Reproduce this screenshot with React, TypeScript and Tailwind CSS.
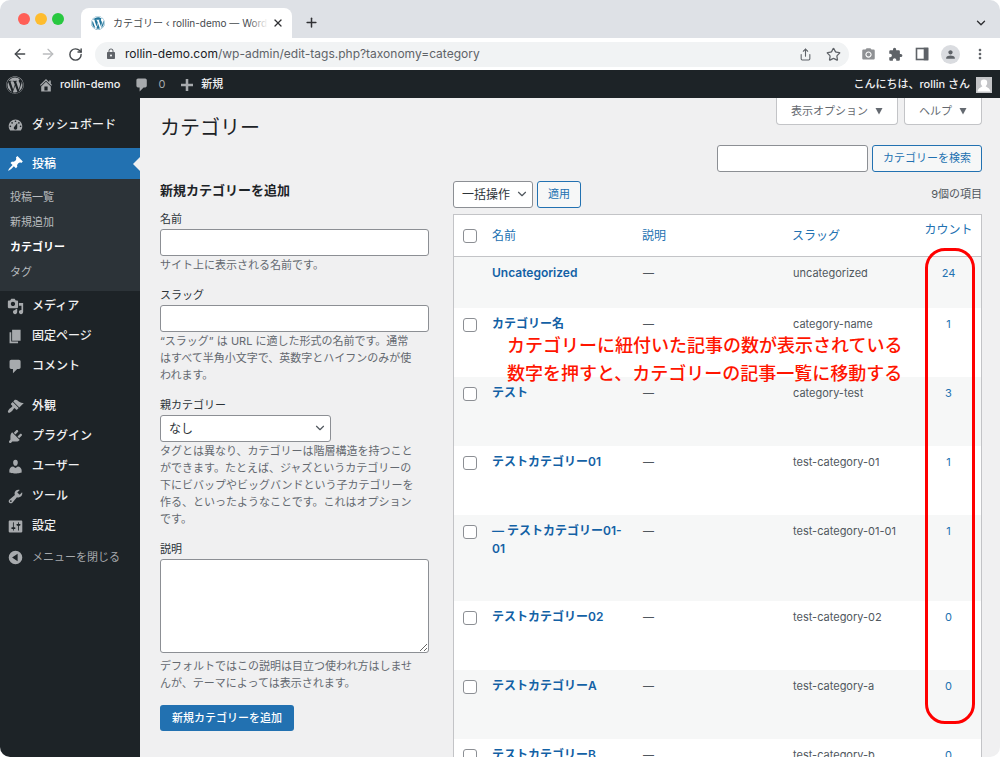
import type { ReactNode } from "react"
import { ArrowLeft, ArrowRight, ChevronDown, Plus, RotateCw, Share, Star, X } from "lucide-react"
import { FaWordpress } from "react-icons/fa"
import { MdExtension, MdLock, MdMoreVert, MdPerson, MdPhotoCamera } from "react-icons/md"

const ICONS = {
    dashboard:
        "M3.76 16h12.48c1.1-1.37 1.76-3.11 1.76-5 0-4.42-3.58-8-8-8s-8 3.58-8 8c0 1.89.66 3.63 1.76 5zM10 4c.55 0 1 .45 1 1s-.45 1-1 1-1-.45-1-1 .45-1 1-1zM6 6c.55 0 1 .45 1 1s-.45 1-1 1-1-.45-1-1 .45-1 1-1zm8 0c.55 0 1 .45 1 1s-.45 1-1 1-1-.45-1-1 .45-1 1-1zm-5.37 5.55L12 7v6c0 1.1-.9 2-2 2s-2-.9-2-2c0-.57.24-1.08.63-1.45zM4 10c.55 0 1 .45 1 1s-.45 1-1 1-1-.45-1-1 .45-1 1-1zm12 0c.55 0 1 .45 1 1s-.45 1-1 1-1-.45-1-1 .45-1 1-1z",
    post: "M10.44 3.02l1.82-1.82 6.36 6.35-1.83 1.82c-1.05-.68-2.48-.57-3.41.36l-.75.75c-.92.93-1.04 2.35-.35 3.41l-1.83 1.82-2.41-2.41-2.8 2.79c-.42.42-3.38 2.71-3.8 2.29s1.86-3.39 2.28-3.81l2.79-2.79L4.1 9.36l1.83-1.82c1.05.69 2.48.57 3.4-.36l.75-.75c.93-.92 1.05-2.35.36-3.41z",
    media: "M13 11V4c0-.55-.45-1-1-1h-1.67L9 1H5L3.67 3H2c-.55 0-1 .45-1 1v7c0 .55.45 1 1 1h10c.55 0 1-.45 1-1zM7 4.5c1.38 0 2.5 1.12 2.5 2.5S8.38 9.5 7 9.5 4.5 8.38 4.5 7 5.62 4.5 7 4.5zM14 6h5v10.5c0 1.38-1.12 2.5-2.5 2.5S14 17.88 14 16.5s1.12-2.5 2.5-2.5c.17 0 .34.02.5.05V9h-3V6zm-4 8.05V13h2v3.5c0 1.38-1.12 2.5-2.5 2.5S7 17.88 7 16.5 8.12 14 9.5 14c.17 0 .34.02.5.05z",
    page: "M6 15V2h10v13H6zm-1 1h8v2H3V5h2v11z",
    comments: "M5 2h9c1.1 0 2 .9 2 2v7c0 1.1-.9 2-2 2h-2l-5 5v-5H5c-1.1 0-2-.9-2-2V4c0-1.1.9-2 2-2z",
    appearance:
        "M14.48 11.06L7.41 3.99l1.5-1.5c.5-.56 2.3-.47 3.51.32 1.21.8 1.43 1.28 2.91 2.1 1.18.64 2.45 1.26 4.45.85zm-.71.71L6.7 4.7 4.93 6.47c-.39.39-.39 1.02 0 1.41l1.06 1.06c.39.39.39 1.03 0 1.42-.6.6-1.43 1.11-2.21 1.69-.35.26-.7.53-1.01.84C1.43 14.23.4 16.08 1.4 17.07c.99 1 2.84-.03 4.18-1.36.31-.31.58-.66.85-1.02.57-.78 1.08-1.61 1.69-2.21.39-.39 1.02-.39 1.41 0l1.06 1.06c.39.39 1.02.39 1.41 0z",
    plugins:
        "M13.11 4.36L9.87 7.6 8 5.73l3.24-3.24c.35-.34 1.05-.2 1.56.32.52.51.66 1.21.31 1.55zm-8 1.77l.91-1.12 9.01 9.01-1.19.84c-.71.71-2.63 1.16-3.82 1.16H6.14L4.9 17.26c-.59.59-1.54.59-2.12 0-.59-.58-.59-1.53 0-2.12l1.24-1.24v-3.88c0-1.13.4-3.19 1.09-3.89zm7.26 3.97l3.24-3.24c.34-.35 1.04-.21 1.55.31.52.51.66 1.21.31 1.55l-3.24 3.25z",
    users: "M10 9.25c-2.27 0-2.73-3.44-2.73-3.44C7 4.02 7.82 2 9.97 2c2.16 0 2.98 2.02 2.71 3.81 0 0-.41 3.44-2.68 3.44zm0 2.57L12.72 10c2.39 0 4.52 2.33 4.52 4.53v2.49s-3.65 1.13-7.24 1.13c-3.65 0-7.24-1.13-7.24-1.13v-2.49c0-2.25 1.94-4.48 4.47-4.48z",
    tools: "M16.68 9.77c-1.34 1.34-3.3 1.67-4.95.99l-5.41 6.52c-.99.99-2.59.99-3.58 0s-.99-2.59 0-3.57l6.52-5.42c-.68-1.65-.35-3.61.99-4.95 1.28-1.28 3.12-1.62 4.72-1.06l-2.89 2.89 2.82 2.82 2.86-2.87c.53 1.58.18 3.39-1.08 4.65zM3.81 16.21c.4.39 1.04.39 1.43 0 .4-.4.4-1.04 0-1.43-.39-.4-1.03-.4-1.43 0-.39.39-.39 1.03 0 1.43z",
    settings:
        "M18 16V4c0-.55-.45-1-1-1H3c-.55 0-1 .45-1 1v12c0 .55.45 1 1 1h14c.55 0 1-.45 1-1zM8 11h1c.55 0 1 .45 1 1s-.45 1-1 1H8v1.5c0 .28-.22.5-.5.5s-.5-.22-.5-.5V13H6c-.55 0-1-.45-1-1s.45-1 1-1h1V5.5c0-.28.22-.5.5-.5s.5.22.5.5V11zm5-2h-1c-.55 0-1-.45-1-1s.45-1 1-1h1V5.5c0-.28.22-.5.5-.5s.5.22.5.5V7h1c.55 0 1 .45 1 1s-.45 1-1 1h-1v5.5c0 .28-.22.5-.5.5s-.5-.22-.5-.5V9z",
    collapse: "M10 2a8 8 0 1 0 0 16a8 8 0 1 0 0-16zM12.5 5.5v9L6 10z",
    home: "M16 8.5l1.53 1.53-1.06 1.06L10 4.6l-6.47 6.49-1.06-1.06L10 2.5l4 4v-2h2v4zm-6-2.46l6 5.99V18H4v-5.97zM12 17v-5H8v5h4z",
    plus: "M17.5 8.4v3.2h-5.9v5.9h-3.2v-5.9H2.500v-3.2h5.9V2.500h3.2v5.9z",
}

type IconName = keyof typeof ICONS

function Dashicon({ name, className = "size-[18px]" }: { name: IconName; className?: string }) {
    return (
        <svg viewBox="0 0 20 20" fill="currentColor" fillRule="evenodd" className={className} aria-hidden="true">
            <path d={ICONS[name]} />
        </svg>
    )
}

const posts = ["投稿一覧", "新規追加", "カテゴリー", "タグ"]

const contentMenu: { icon: IconName; label: string }[] = [
    { icon: "media", label: "メディア" },
    { icon: "page", label: "固定ページ" },
    { icon: "comments", label: "コメント" },
]

const siteMenu: { icon: IconName; label: string }[] = [
    { icon: "appearance", label: "外観" },
    { icon: "plugins", label: "プラグイン" },
    { icon: "users", label: "ユーザー" },
    { icon: "tools", label: "ツール" },
    { icon: "settings", label: "設定" },
]

const categories = [
    { name: "Uncategorized", slug: "uncategorized", count: 24, height: "h-[51px]", locked: true },
    { name: "カテゴリー名", slug: "category-name", count: 1, height: "h-[69px]" },
    { name: "テスト", slug: "category-test", count: 3, height: "h-[69px]" },
    { name: "テストカテゴリー01", slug: "test-category-01", count: 1, height: "h-[69px]" },
    { name: "— テストカテゴリー01-01", slug: "test-category-01-01", count: 1, height: "h-[86px]" },
    { name: "テストカテゴリー02", slug: "test-category-02", count: 0, height: "h-[69px]" },
    { name: "テストカテゴリーA", slug: "test-category-a", count: 0, height: "h-[69px]" },
    { name: "テストカテゴリーB", slug: "test-category-b", count: 0, height: "h-[69px]" },
]

const fieldClass = "block w-full rounded-[3px] border border-[#8c8f94] bg-white"
const outlineButton =
    "h-[27px] shrink-0 rounded-[3px] border border-[#2271b1] bg-[#f6f7f7] px-2.5 text-[11px] text-[#2271b1]"
const screenTab =
    "flex h-[27px] items-center gap-[7px] rounded-b border border-t-0 border-[#c3c4c7] bg-white px-3.5"

function Browser() {
    return (
        <header className="shrink-0 bg-[#dee1e6]">
            <div className="flex h-[38px] items-end">
                <div className="flex gap-[5px] self-center pl-[18px] pr-[17px]">
                    <span className="size-3 rounded-full bg-[#ff5f57]" />
                    <span className="size-3 rounded-full bg-[#febc2e]" />
                    <span className="size-3 rounded-full bg-[#28c840]" />
                </div>
                <div className="flex h-[30px] w-[211px] items-center rounded-t-lg bg-white pl-2.5 pr-2">
                    <FaWordpress className="size-[14px] shrink-0 text-[#21759b]" />
                    <span className="relative ml-2 min-w-0 flex-1 overflow-hidden whitespace-nowrap text-[10px] text-[#45494d]">
                        カテゴリー ‹ rollin-demo — WordPress
                        <span className="absolute inset-y-0 right-0 w-5 bg-linear-to-r from-transparent to-white" />
                    </span>
                    <button aria-label="Close tab" className="ml-1 text-[#303134]">
                        <X className="size-3" strokeWidth={2.5} />
                    </button>
                </div>
                <button aria-label="New tab" className="mb-2 ml-3 text-[#303134]">
                    <Plus className="size-[15px]" strokeWidth={2.4} />
                </button>
                <button aria-label="Search tabs" className="mb-2 ml-auto mr-3 text-[#303134]">
                    <ChevronDown className="size-3.5" strokeWidth={2.4} />
                </button>
            </div>
            <div className="flex h-8 items-center bg-white pl-3 pr-3">
                <div className="flex gap-3 text-[#45494d]">
                    <button aria-label="Back">
                        <ArrowLeft className="size-4" />
                    </button>
                    <button aria-label="Forward" className="text-[#babcbe]">
                        <ArrowRight className="size-4" />
                    </button>
                    <button aria-label="Reload">
                        <RotateCw className="size-[15px]" strokeWidth={2.3} />
                    </button>
                </div>
                <div className="ml-3 flex h-[25px] flex-1 items-center rounded-full bg-[#f1f3f4] pl-2.5 pr-2 text-[#5f6368]">
                    <MdLock className="size-3" />
                    <span className="ml-2 flex-1 text-xs">
                        <span className="text-[#202124]">rollin-demo.com</span>
                        /wp-admin/edit-tags.php?taxonomy=category
                    </span>
                    <button aria-label="Share">
                        <Share className="size-[13px]" />
                    </button>
                    <button aria-label="Bookmark" className="ml-3.5">
                        <Star className="size-[15px]" />
                    </button>
                </div>
                <div className="ml-3 flex items-center gap-3 text-[#5f6368]">
                    <button aria-label="Screenshot" className="text-[#8f9194]">
                        <MdPhotoCamera className="size-[15px]" />
                    </button>
                    <button aria-label="Extensions">
                        <MdExtension className="size-[15px]" />
                    </button>
                    <button aria-label="Side panel">
                        <svg viewBox="0 0 14 14" className="size-3.5" fill="none" stroke="currentColor" strokeWidth="1.6">
                            <rect x="1.5" y="1.5" width="11" height="11" />
                            <rect x="9.5" y="1.5" width="3" height="11" fill="currentColor" />
                        </svg>
                    </button>
                    <button aria-label="Profile" className="rounded-full bg-[#dadce0] p-[3px]">
                        <MdPerson className="size-[13px]" />
                    </button>
                    <button aria-label="Menu">
                        <MdMoreVert className="size-4" />
                    </button>
                </div>
            </div>
        </header>
    )
}

function AdminBar() {
    return (
        <div className="flex h-7 shrink-0 items-center bg-[#1d2327] pl-[6px] pr-2 pt-px text-[11px] font-medium text-[#f0f0f1]">
            <a href="#" aria-label="WordPress">
                <FaWordpress className="size-[18px] text-[#a7aaad]" />
            </a>
            <a href="#" className="ml-3.5 flex items-center gap-1.5">
                <Dashicon name="home" className="size-4 text-[#a7aaad]" />
                rollin-demo
            </a>
            <a href="#" className="ml-3.5 flex items-center gap-2 font-normal text-[#a7aaad]">
                <Dashicon name="comments" className="size-4" />0
            </a>
            <a href="#" className="ml-3.5 flex items-center gap-1.5">
                <Dashicon name="plus" className="size-4 text-[#a7aaad]" />
                新規
            </a>
            <a href="#" className="ml-auto flex items-center gap-1.5">
                こんにちは、rollin さん
                <svg viewBox="0 0 16 16" className="size-4" aria-hidden="true">
                    <rect width="16" height="16" fill="#c3c4c7" />
                    <path
                        d="M8 2.5a3.2 3.2 0 0 1 3.2 3.4c0 1.4-.7 2.5-1.5 3 0 1.2 4.3 1.5 4.8 5.6h-13c.5-4.1 4.8-4.4 4.8-5.6-.8-.5-1.5-1.6-1.5-3A3.2 3.2 0 0 1 8 2.5z"
                        fill="#fff"
                    />
                </svg>
            </a>
        </div>
    )
}

function MenuItem({ icon, label }: { icon: IconName; label: string }) {
    return (
        <a href="#" className="flex h-[30px] items-center gap-2 pl-[7px] font-medium text-[#f0f0f1]">
            <Dashicon name={icon} className="size-[17px] text-[#a7aaad]" />
            {label}
        </a>
    )
}

function Sidebar() {
    return (
        <nav className="w-[140px] shrink-0 bg-[#1d2327] pt-3 text-xs">
            <MenuItem icon="dashboard" label="ダッシュボード" />
            <a
                href="#"
                className="relative mt-2 flex h-[31px] items-center gap-2 bg-[#2271b1] pl-[7px] font-medium text-white"
            >
                <Dashicon name="post" className="size-[17px]" />
                投稿
                <span className="absolute right-0 top-1/2 -translate-y-1/2 border-y-[7px] border-r-[7px] border-y-transparent border-r-[#f0f0f1]" />
            </a>
            <div className="bg-[#2c3338] py-1.5 text-[11px]">
                {posts.map((label) => (
                    <a
                        key={label}
                        href="#"
                        className={
                            label === "カテゴリー"
                                ? "flex h-[25px] items-center pl-2.5 font-bold text-white"
                                : "flex h-[25px] items-center pl-2.5 text-[#b9bcbf]"
                        }
                    >
                        {label}
                    </a>
                ))}
            </div>
            {contentMenu.map((item) => (
                <MenuItem key={item.label} {...item} />
            ))}
            <div className="h-2.5" />
            {siteMenu.map((item) => (
                <MenuItem key={item.label} {...item} />
            ))}
            <button className="flex h-8 items-center gap-2 pl-[7px] text-[11px] text-[#a7aaad]">
                <Dashicon name="collapse" className="size-[17px]" />
                メニューを閉じる
            </button>
        </nav>
    )
}

function Field({ id, label, help, children }: { id: string; label: string; help: string; children: ReactNode }) {
    return (
        <div className="mb-[13px]">
            <label htmlFor={id} className="block pb-px leading-[17px] text-[#2c3338]">
                {label}
            </label>
            {children}
            <p className="mt-px pr-3 leading-[17px] text-[#646970]">{help}</p>
        </div>
    )
}

function AddForm() {
    return (
        <form className="w-[269px] shrink-0 text-[11px]">
            <h2 className="mb-[11px] text-[13px] font-bold leading-5 text-[#1d2327]">新規カテゴリーを追加</h2>
            <Field id="name" label="名前" help="サイト上に表示される名前です。">
                <input id="name" type="text" className={`${fieldClass} h-[27px]`} />
            </Field>
            <Field
                id="slug"
                label="スラッグ"
                help="“スラッグ” は URL に適した形式の名前です。通常はすべて半角小文字で、英数字とハイフンのみが使われます。"
            >
                <input id="slug" type="text" className={`${fieldClass} h-[27px]`} />
            </Field>
            <Field
                id="parent"
                label="親カテゴリー"
                help="タグとは異なり、カテゴリーは階層構造を持つことができます。たとえば、ジャズというカテゴリーの下にビバップやビッグバンドという子カテゴリーを作る、といったようなことです。これはオプションです。"
            >
                <div className="relative w-[171px]">
                    <select id="parent" className={`${fieldClass} h-[27px] appearance-none px-2 text-xs text-[#2c3338]`}>
                        <option>なし</option>
                    </select>
                    <ChevronDown className="pointer-events-none absolute right-1 top-1.5 size-3.5 text-[#50575e]" />
                </div>
            </Field>
            <Field
                id="description"
                label="説明"
                help="デフォルトではこの説明は目立つ使われ方はしませんが、テーマによっては表示されます。"
            >
                <textarea id="description" className={`${fieldClass} mb-[5px] h-[94px]`} />
            </Field>
            <button type="button" className="h-[26px] rounded-[3px] bg-[#2271b1] px-3 font-medium text-white">
                新規カテゴリーを追加
            </button>
        </form>
    )
}

const checkbox = "block size-3.5 appearance-none rounded-[3px] border border-[#8c8f94] bg-white"

function CategoryTable() {
    return (
        <table className="w-full table-fixed border-separate border-spacing-0 border border-[#c3c4c7] bg-white text-left">
            <thead className="text-xs text-[#2271b1]">
                <tr className="h-[42px]">
                    <th className="w-[30px] border-b border-[#c3c4c7] pl-[9px]">
                        <input type="checkbox" aria-label="Select all" className={checkbox} />
                    </th>
                    <th className="border-b border-[#c3c4c7] pl-2 font-normal">
                        <a href="#">名前</a>
                    </th>
                    <th className="border-b border-[#c3c4c7] pl-2 font-normal">
                        <a href="#">説明</a>
                    </th>
                    <th className="w-[132px] border-b border-[#c3c4c7] pl-2 font-normal">
                        <a href="#">スラッグ</a>
                    </th>
                    <th className="w-[65px] border-b border-[#c3c4c7] pt-[7px] text-center align-top font-normal">
                        <a href="#">カウント</a>
                    </th>
                </tr>
            </thead>
            <tbody className="align-top text-[11px] leading-[18px] text-[#50575e]">
                {categories.map((c) => (
                    <tr key={c.slug} className={`${c.height} odd:bg-[#f6f7f7]`}>
                        <td className="pl-[9px] pt-2.5">
                            {!c.locked && <input type="checkbox" aria-label={c.name} className={checkbox} />}
                        </td>
                        <td className="pl-2 pr-2 pt-[7px] text-xs leading-[18px]">
                            <a href="#" className="font-semibold text-[#1361a5]">
                                {c.name}
                            </a>
                        </td>
                        <td className="pl-[9px] pt-[7px]">—</td>
                        <td className="pl-[9px] pt-[7px]">{c.slug}</td>
                        <td className="pt-[7px] text-center">
                            <a href="#" className="text-[#2271b1]">
                                {c.count}
                            </a>
                        </td>
                    </tr>
                ))}
            </tbody>
        </table>
    )
}

export default function App() {
    return (
        <div className="flex h-screen flex-col overflow-hidden rounded-[10px] font-['Inter','Noto_Sans_CJK_JP',sans-serif]">
            <Browser />
            <AdminBar />
            <div className="flex min-h-0 flex-1">
                <Sidebar />
                <main className="min-w-0 flex-1 overflow-hidden bg-[#f0f0f1] pl-5 pr-[18px]">
                    <div className="flex items-start justify-between">
                        <h1 className="pt-4 text-xl leading-7 text-[#1d2327]">カテゴリー</h1>
                        <div className="flex gap-1.5 text-[11px] text-[#646970]">
                            <button className={screenTab}>
                                表示オプション
                                <svg viewBox="0 0 8 8" className="size-2" fill="currentColor" aria-hidden="true">
                                    <path d="M.5 1h7L4 7.500z" />
                                </svg>
                            </button>
                            <button className={screenTab}>
                                ヘルプ
                                <svg viewBox="0 0 8 8" className="size-2" fill="currentColor" aria-hidden="true">
                                    <path d="M.5 1h7L4 7.500z" />
                                </svg>
                            </button>
                        </div>
                    </div>
                    <div className="mt-[3px] flex justify-end gap-1">
                        <input
                            type="search"
                            aria-label="カテゴリーを検索"
                            className="h-[27px] w-[151px] rounded-[3px] border border-[#8c8f94] bg-white"
                        />
                        <button className={outlineButton}>カテゴリーを検索</button>
                    </div>
                    <div className="mt-2 flex gap-6">
                        <AddForm />
                        <section className="min-w-0 flex-1">
                            <div className="mb-1.5 mt-px flex items-center text-xs">
                                <div className="relative">
                                    <select
                                        aria-label="一括操作"
                                        className="h-[27px] w-20 appearance-none rounded-[3px] border border-[#8c8f94] bg-white pl-2 text-[#2c3338]"
                                    >
                                        <option>一括操作</option>
                                    </select>
                                    <ChevronDown className="pointer-events-none absolute right-1 top-1.5 size-3.5 text-[#50575e]" />
                                </div>
                                <button className={`${outlineButton} ml-1`}>適用</button>
                                <span className="ml-auto text-[11px] text-[#50575e]">9個の項目</span>
                            </div>
                            <div className="relative">
                                <CategoryTable />
                                <p className="absolute left-[54px] top-[118px] whitespace-nowrap text-lg font-medium leading-7 text-[#ff1500]">
                                    カテゴリーに紐付いた記事の数が表示されている
                                    <br />
                                    数字を押すと、カテゴリーの記事一覧に移動する
                                </p>
                                <div className="pointer-events-none absolute right-[7px] top-[34px] h-[476px] w-[50px] rounded-[20px] border-[3px] border-[#ff0000]" />
                            </div>
                        </section>
                    </div>
                </main>
            </div>
        </div>
    )
}
